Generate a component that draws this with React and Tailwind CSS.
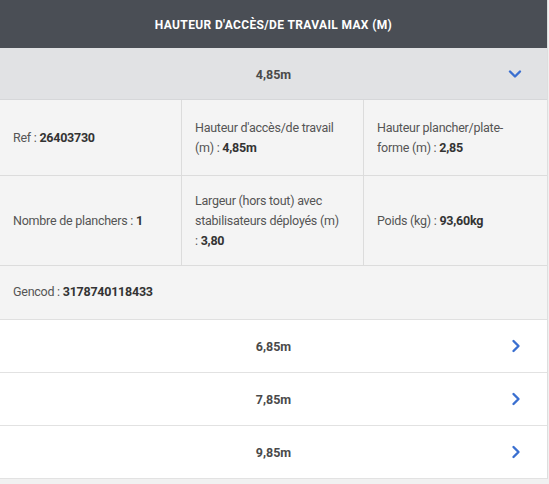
import React from "react";

const FONT = { fontFamily: 'Roboto, "Liberation Sans", sans-serif' };

const ChevronDown = () => (
  <svg width="14" height="10" viewBox="0 0 14 10" fill="none">
    <path d="M2 2.5 L7 7.5 L12 2.5" stroke="#3a6fd0" strokeWidth="2.4" strokeLinecap="round" strokeLinejoin="round" />
  </svg>
);

const ChevronRight = () => (
  <svg width="10" height="14" viewBox="0 0 10 14" fill="none">
    <path d="M2.5 2 L7.5 7 L2.5 12" stroke="#3a6fd0" strokeWidth="2.4" strokeLinecap="round" strokeLinejoin="round" />
  </svg>
);

const Cell = ({ children, border = true }) => (
  <div
    className={`flex items-center pl-[13px] pr-[22px] text-[12.5px] leading-[20px] tracking-[-0.02em] text-[#555] ${
      border ? "border-r border-[#dcdcdc]" : ""
    }`}
  >
    <p>{children}</p>
  </div>
);

const B = ({ children }) => <b className="font-bold text-[#333]">{children}</b>;

const Row = ({ value }) => (
  <div className="relative flex h-[53px] items-center justify-center border-b border-[#e2e2e2] bg-white">
    <span className="pt-[2px] text-[12.5px] font-bold text-[#4a4a4a]">{value}</span>
    <span className="absolute right-[26px] top-1/2 -translate-y-1/2">
      <ChevronRight />
    </span>
  </div>
);

export default function App() {
  return (
    <div className="min-h-screen bg-[#f1f1f1]" style={FONT}>
      <div className="w-[548px] border-r border-[#dedede]">
        <div className="flex h-[48px] items-center justify-center bg-[#4a4e55]">
          <h2 className="pt-[2px] text-[12px] font-bold uppercase tracking-[0.03em] text-white">
            Hauteur d'accès/de travail max (m)
          </h2>
        </div>

        <div className="relative flex h-[52px] items-center justify-center border-b border-[#d6d7d9] bg-[#e1e2e4]">
          <span className="pt-[4px] text-[12.5px] font-bold text-[#4a4a4a]">4,85m</span>
          <span className="absolute right-[25px] top-1/2 -translate-y-1/2">
            <ChevronDown />
          </span>
        </div>

        <div className="bg-[#f4f4f4]">
          <div className="grid h-[76px] grid-cols-[182px_182px_1fr] border-b border-[#dcdcdc]">
            <Cell>
              Ref : <B>26403730</B>
            </Cell>
            <Cell>
              Hauteur d'accès/de travail (m) : <B>4,85m</B>
            </Cell>
            <Cell border={false}>
              Hauteur plancher/plate-forme (m) : <B>2,85</B>
            </Cell>
          </div>
          <div className="grid h-[90px] grid-cols-[182px_182px_1fr] border-b border-[#dcdcdc]">
            <Cell>
              Nombre de planchers : <B>1</B>
            </Cell>
            <Cell>
              Largeur (hors tout) avec stabilisateurs déployés (m) : <B>3,80</B>
            </Cell>
            <Cell border={false}>
              Poids (kg) : <B>93,60kg</B>
            </Cell>
          </div>
          <div className="flex h-[54px] items-center border-b border-[#e0e0e0] px-[13px] text-[12.5px] tracking-[-0.02em] text-[#555]">
            <p>
              Gencod : <B>3178740118433</B>
            </p>
          </div>
        </div>

        <Row value="6,85m" />
        <Row value="7,85m" />
        <Row value="9,85m" />
      </div>
    </div>
  );
}
